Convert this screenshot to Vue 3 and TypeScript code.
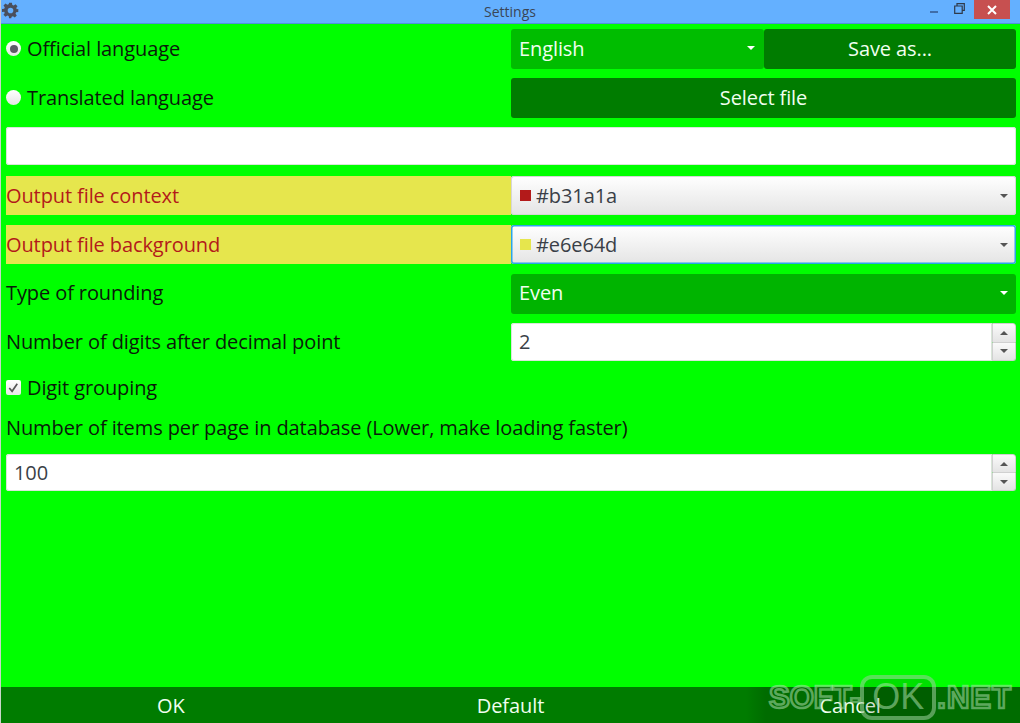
<template>
  <div class="window">
    <header class="titlebar">
      <svg class="gear" viewBox="0 0 24 24" width="17" height="17"><path fill="#4a4f5c" fill-rule="evenodd" d="M10 1h4l.6 3.1 1.9.8 2.6-1.8 2.8 2.8-1.8 2.6.8 1.9L23 10v4l-3.1.6-.8 1.9 1.8 2.6-2.8 2.8-2.6-1.8-1.9.8L13 23h-3l-.6-3.1-1.9-.8-2.6 1.8-2.8-2.8 1.8-2.6-.8-1.9L0 14v-4l3.1-.6.8-1.9L2.1 4.9l2.8-2.8 2.6 1.8 1.9-.8zM12 8a4 4 0 1 0 0 8 4 4 0 0 0 0-8z"/></svg>
      <span class="title">Settings</span>
      <div class="controls">
        <span class="min"></span>
        <svg class="restore" viewBox="0 0 11 11" width="11" height="11"><path fill="none" stroke="#2f3a4a" stroke-width="1.2" d="M3 2.5V.7h7.3v6.6H8.2M.7 3h7.5v7.3H.7z"/></svg>
        <span class="close">
          <svg viewBox="0 0 10 10" width="10" height="10"><path stroke="#fff" stroke-width="2" d="M1 1l8 8M9 1l-8 8"/></svg>
        </span>
      </div>
    </header>

    <main class="content">
      <div class="row up-text">
        <label class="choice"><span class="radio on"></span>Official language</label>
        <div class="pair">
          <div class="combo dark mid"><span>English</span><i class="caret light"></i></div>
          <button class="btn">Save as...</button>
        </div>
      </div>
      <div class="row up-text">
        <label class="choice"><span class="radio"></span>Translated language</label>
        <button class="btn">Select file</button>
      </div>
      <div class="field path"></div>
      <div class="row tint">
        <span class="hl">Output file context</span>
        <div class="combo picker"><span class="swatch red"></span><span>#b31a1a</span><i class="caret"></i></div>
      </div>
      <div class="row tint">
        <span class="hl">Output file background</span>
        <div class="combo picker focus"><span class="swatch yellow"></span><span>#e6e64d</span><i class="caret"></i></div>
      </div>
      <div class="row up-text rounding">
        <span class="lbl">Type of rounding</span>
        <div class="combo dark"><span>Even</span><i class="caret light"></i></div>
      </div>
      <div class="row spin-row up-text">
        <span class="lbl">Number of digits after decimal point</span>
        <div class="spinner">
          <div class="field">2</div>
          <div class="arrows"><b><i class="up"></i></b><b><i class="caret"></i></b></div>
        </div>
      </div>
      <label class="check-row"><span class="check"><svg viewBox="0 0 16 16" width="16" height="16"><path fill="none" stroke="#555" stroke-width="1.8" d="M3.5 8l3 3.5 5.5-8"/></svg></span>Digit grouping</label>
      <div class="lbl items">Number of items per page in database (Lower, make loading faster)</div>
      <div class="spinner wide">
        <div class="field">100</div>
        <div class="arrows"><b><i class="up"></i></b><b><i class="caret"></i></b></div>
      </div>
    </main>

    <footer class="bottom">
      <span>OK</span><span>Default</span><span>Cancel</span>
    </footer>

    <div class="mark"><span>SOFT-</span><span class="ok">OK</span><span class="net">.NET</span></div>
  </div>
</template>

<script setup lang="ts">
</script>

<style>
html, body { margin: 0; background: #0f0; overflow: hidden; }
</style>

<style scoped>
.window {
  position: relative;
  width: 1020px;
  height: 723px;
  display: flex;
  flex-direction: column;
  overflow: hidden;
  font-family: "Open Sans", "Noto Sans", sans-serif;
  font-size: 20px;
  letter-spacing: -0.1px;
  color: #0a1a0a;
  background: #0f0;
  border-left: 1px solid #c9d6c9;
  box-sizing: border-box;
}
.titlebar {
  height: 24px;
  box-sizing: border-box;
  flex: none;
  position: relative;
  margin-left: -1px;
  display: flex;
  align-items: center;
  justify-content: center;
  background: #64b0ff;
  border-bottom: 1px solid #4f93dc;
}
.gear { position: absolute; left: 2px; top: 2px; }
.title { font-size: 14px; letter-spacing: 0; color: #3a4656; }
.controls { position: absolute; right: 10px; top: 0; height: 19px; display: flex; align-items: center; }
.min { width: 8px; height: 2px; margin-top: 5px; margin-right: 16px; background: #3f6da8; }
.restore { margin-top: -3px; margin-right: 9px; }
.close {
  width: 36px; height: 19px;
  display: flex; align-items: center; justify-content: center;
  background: #c75050;
}
.content {
  flex: 1;
  padding: 5px 4px 0 5px;
  display: flex;
  flex-direction: column;
}
.row {
  display: grid;
  grid-template-columns: 505px 505px;
  height: 40px;
  margin-bottom: 9px;
  align-items: stretch;
}
.choice, .lbl, .hl { display: flex; align-items: center; }
.choice { gap: 6px; }
.up-text .choice, .up-text .lbl { padding-bottom: 2px; }
.up-text .combo, .up-text .btn, .up-text .field { padding-bottom: 2px; }
.rounding .combo, .rounding .lbl { padding-bottom: 3px; }
.radio {
  width: 15px; height: 15px;
  margin-top: 1px;
  border-radius: 50%;
  background: linear-gradient(#fff, #e6e6e6);
  display: flex; align-items: center; justify-content: center;
}
.radio.on::after { content: ""; width: 8px; height: 8px; border-radius: 50%; background: #5c5c66; }
.pair { display: grid; grid-template-columns: 253px 252px; }
.btn {
  border: 0;
  border-radius: 3px;
  background: #007c00;
  color: #f0fff0;
  font: inherit;
  letter-spacing: inherit;
  text-align: center;
}
.combo {
  display: flex;
  align-items: center;
  padding: 0 8px;
  border-radius: 3px;
  position: relative;
}
.combo .caret { margin-left: auto; }
.dark { background: #00b400; color: #f0fff0; }
.dark.mid { background: #00bd00; padding-right: 9px; }
.picker {
  background: linear-gradient(#fff, #e4e4e4);
  box-shadow: inset 0 0 0 1px #d6d6d6;
  color: #3a3f47;
  gap: 5px;
}
.picker.focus { box-shadow: inset 0 0 0 1.5px #2aa5e8; }
.caret, .up {
  display: block;
  width: 0; height: 0;
  border-left: 4px solid transparent;
  border-right: 4px solid transparent;
}
.caret { border-top: 4px solid #555; }
.up { border-bottom: 4px solid #555; }
.caret.light { border-top-color: #fff; }
.swatch { width: 11px; height: 11px; margin-left: 1px; }
.red { background: #b31a1a; }
.yellow { background: #e6e64d; }
.tint .hl {
  background: #e6e64d;
  color: #b31a1a;
}
.tint { margin-bottom: 10px; height: 39px; }
.field {
  background: #fff;
  border-radius: 3px;
  box-shadow: inset 0 0 0 1px #d9e6d9;
  color: #3a3f47;
  display: flex;
  align-items: center;
  padding: 0 8px;
}
.path { height: 38px; margin-bottom: 11px; }
.spin-row { height: 38px; margin-bottom: 0; }
.spinner { display: flex; align-items: stretch; }
.spinner .field { flex: 1; border-radius: 3px 0 0 3px; }
.arrows { width: 24px; display: flex; flex-direction: column; }
.arrows b {
  flex: 1;
  display: flex; align-items: center; justify-content: center;
  background: linear-gradient(#fafafa, #e4e4e4);
  border: 1px solid #d0d0d0;
}
.arrows b:first-child { border-radius: 0 3px 0 0; }
.arrows b:last-child { border-radius: 0 0 3px 0; border-top: 0; }
.check-row {
  display: flex;
  align-items: center;
  gap: 6px;
  height: 27px;
  margin-top: 13px;
}
.check {
  width: 15px; height: 15px;
  border-radius: 2px;
  background: linear-gradient(#fff, #e8e8e8);
  display: flex; align-items: center; justify-content: center;
}
.items { height: 27px; margin-top: 13px; margin-bottom: 13px; }
.spinner.wide { width: 1010px; height: 37px; }
.bottom {
  height: 36px;
  flex: none;
  display: grid;
  grid-template-columns: repeat(3, 1fr);
  background: linear-gradient(90deg, #007c00 745px, #006c00 765px);
  color: #f0fff0;
  text-align: center;
  line-height: 38px;
}
.mark {
  position: absolute;
  left: 768px;
  top: 675px;
  height: 45px;
  display: flex;
  align-items: center;
  font-family: "Liberation Sans", sans-serif;
  font-size: 31px;
  font-weight: 700;
  letter-spacing: 0;
  color: rgba(0, 90, 0, 0.25);
  -webkit-text-stroke: 2.5px rgba(175, 225, 175, 0.55);
}
.ok {
  width: 76px;
  height: 45px;
  box-sizing: border-box;
  border: 4px solid rgba(175, 225, 175, 0.5);
  border-radius: 12px;
  background: rgba(0, 0, 0, 0.12);
  color: rgba(175, 225, 175, 0.55);
  -webkit-text-stroke: 0;
  font-size: 36px;
  font-weight: 400;
  line-height: 36px;
  text-align: center;
}
.net { letter-spacing: 1px; margin-left: 1px; }
</style>
